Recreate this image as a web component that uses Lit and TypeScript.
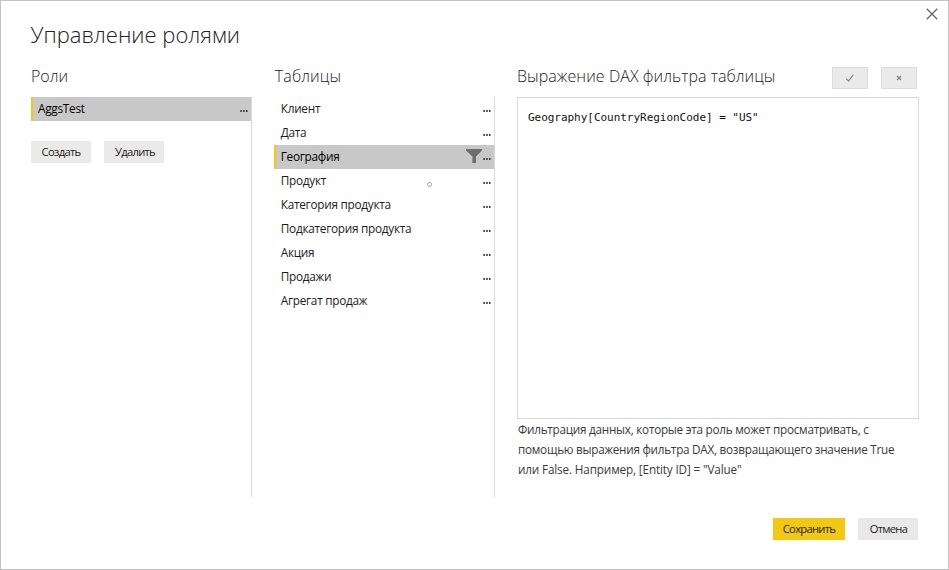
import { LitElement, html, css, nothing } from "lit";
import { customElement, property } from "lit/decorators.js";
import { classMap } from "lit/directives/class-map.js";

const TABLES = [
  "Клиент",
  "Дата",
  "География",
  "Продукт",
  "Категория продукта",
  "Подкатегория продукта",
  "Акция",
  "Продажи",
  "Агрегат продаж",
];

@customElement("list-row")
export class ListRow extends LitElement {
  @property() label = "";
  @property({ type: Boolean }) selected = false;
  @property({ type: Boolean }) filtered = false;

  static styles = css`
    :host {
      display: block;
    }
    .row {
      display: flex;
      align-items: center;
      height: 24px;
      box-sizing: border-box;
      padding-left: 4px;
      border-left: 3px solid transparent;
      color: #1c1c1c;
      font-size: 11.8px;
      letter-spacing: -0.27px;
      line-height: 22px;
      white-space: nowrap;
    }
    .selected {
      background: linear-gradient(#c8c8c8, #c8c8c8) padding-box;
      border-left: 2px solid #f2c811;
      padding-left: 5px;
      color: #000;
    }
    .label {
      flex: 1;
      padding-bottom: 2px;
    }
    .filter {
      display: block;
      margin: -2px 1px 0 0;
    }
    .more {
      display: block;
      margin: 4px 3px 0 0;
    }
  `;

  render() {
    return html`
      <div class=${classMap({ row: true, selected: this.selected })}>
        <span class="label">${this.label}</span>
        ${this.filtered
          ? html`<svg class="filter" width="16" height="14" viewBox="0 0 16 14">
              <path d="M0 0H16V1.6L10 7.5V14H6.4V7.5L0 1.6Z" fill="#6e6e6e" />
            </svg>`
          : nothing}
        <svg class="more" width="8" height="2" viewBox="0 0 8 2">
          <path d="M0.4 0H1.9V2H0.4ZM3.2 0H4.7V2H3.2ZM6 0H7.5V2H6Z" fill="#333" />
        </svg>
      </div>
    `;
  }
}

@customElement("app-root")
export class AppRoot extends LitElement {
  static styles = css`
    :host {
      display: block;
      height: 570px;
      font-family: "Open Sans", "Noto Sans", sans-serif;
    }
    .dialog {
      position: relative;
      box-sizing: border-box;
      width: 949px;
      height: 570px;
      padding: 15px 29px 0 30px;
      border: 1px solid #c3c3c3;
      background: #fff;
      overflow: hidden;
    }
    .close {
      position: absolute;
      top: 7px;
      right: 10px;
      display: block;
    }
    .title {
      margin: 0 0 0 -0.5px;
      height: 50px;
      font-size: 22px;
      font-weight: 300;
      line-height: 36px;
      color: #222;
    }
    .columns {
      display: flex;
      height: 431px;
    }
    .roles {
      width: 221px;
      margin-right: 22px;
    }
    .tables {
      width: 222px;
      margin-right: 22px;
    }
    .expression {
      width: 402px;
    }
    .head {
      display: flex;
      justify-content: space-between;
      height: 31px;
      padding-right: 2px;
    }
    .heading {
      margin: 0;
      font-size: 16px;
      font-weight: 300;
      line-height: 20px;
      color: #222;
      white-space: nowrap;
    }
    .tables .heading {
      padding-left: 1px;
      letter-spacing: 0.15px;
    }
    .expression .heading {
      margin-left: -0.5px;
      letter-spacing: 0.06px;
    }
    .panel {
      height: 400px;
      box-sizing: border-box;
      border-right: 1px solid #d9d9d9;
    }
    .actions {
      display: flex;
      gap: 13px;
      margin-top: 20px;
    }
    .button {
      box-sizing: border-box;
      width: 60px;
      height: 22px;
      padding: 0;
      border: 0;
      background: #eaeae8;
      color: #1c1c1c;
      font-family: inherit;
      font-size: 11.2px;
      line-height: 22px;
      letter-spacing: -0.7px;
      text-align: center;
      white-space: nowrap;
    }
    .remove {
      padding-left: 2px;
    }
    .cancel {
      padding-left: 1px;
      background: #e8e8e8;
    }
    .save {
      width: 72px;
      background: #f2c811;
    }
    .tools {
      display: flex;
      gap: 13px;
      padding-top: 1px;
    }
    .tool {
      display: flex;
      align-items: center;
      justify-content: center;
      box-sizing: border-box;
      width: 36px;
      height: 22px;
      padding: 0;
      border: 1px solid #dcdcdc;
      background: #eaeaea;
    }
    .editor {
      box-sizing: border-box;
      height: 322px;
      padding: 10px 9.5px;
      border: 1px solid #d9d9d9;
      font-family: "DejaVu Sans Mono", monospace;
      font-size: 11px;
      letter-spacing: -0.03px;
      line-height: 20px;
      color: #111;
      white-space: pre;
    }
    .hint {
      margin: 0 0 0 0.5px;
      font-size: 11.7px;
      letter-spacing: -0.24px;
      line-height: 20px;
      color: #3a3a3a;
      white-space: nowrap;
    }
    .last {
      letter-spacing: -0.13px;
    }
    .footer {
      display: flex;
      justify-content: flex-end;
      gap: 13px;
      margin: 21px 1px 0 0;
    }
    .cursor {
      position: absolute;
      left: 426px;
      top: 181px;
      width: 3px;
      height: 3px;
      border: 1px solid #a3a3ac;
      border-radius: 50%;
    }
  `;

  render() {
    return html`
      <div class="dialog">
        <svg class="close" width="12" height="12" viewBox="0 0 12 12">
          <path d="M0.8 0.8L11.2 11.2M11.2 0.8L0.8 11.2" stroke="#666" stroke-width="1.3" fill="none" />
        </svg>
        <h1 class="title">Управление ролями</h1>
        <div class="columns">
          <section class="roles">
            <div class="head"><h2 class="heading">Роли</h2></div>
            <div class="panel">
              <list-row label="AggsTest" selected></list-row>
              <div class="actions">
                <button class="button">Создать</button>
                <button class="button remove">Удалить</button>
              </div>
            </div>
          </section>
          <section class="tables">
            <div class="head"><h2 class="heading">Таблицы</h2></div>
            <div class="panel">
              ${TABLES.map(
                (name) => html`<list-row
                  .label=${name}
                  .selected=${name === "География"}
                  .filtered=${name === "География"}
                ></list-row>`
              )}
            </div>
          </section>
          <section class="expression">
            <div class="head">
              <h2 class="heading">Выражение DAX фильтра таблицы</h2>
              <div class="tools">
                <button class="tool">
                  <svg width="10" height="10" viewBox="0 0 10 10">
                    <path d="M1.2 5.6L3.6 8L8.4 1.6" stroke="#8a8a8a" stroke-width="1.2" fill="none" />
                  </svg>
                </button>
                <button class="tool">
                  <svg width="6" height="6" viewBox="0 0 6 6">
                    <path d="M1 1L5 5M5 1L1 5" stroke="#858585" stroke-width="1.3" fill="none" />
                  </svg>
                </button>
              </div>
            </div>
            <div class="editor">Geography[CountryRegionCode] = "US"</div>
            <div class="hint">
              Фильтрация данных, которые эта роль может просматривать, с<br />
              помощью выражения фильтра DAX, возвращающего значение True<br />
              <span class="last">или False. Например, [Entity ID] = "Value"</span>
            </div>
          </section>
        </div>
        <div class="footer">
          <button class="button save">Сохранить</button>
          <button class="button cancel">Отмена</button>
        </div>
        <div class="cursor"></div>
      </div>
    `;
  }
}
